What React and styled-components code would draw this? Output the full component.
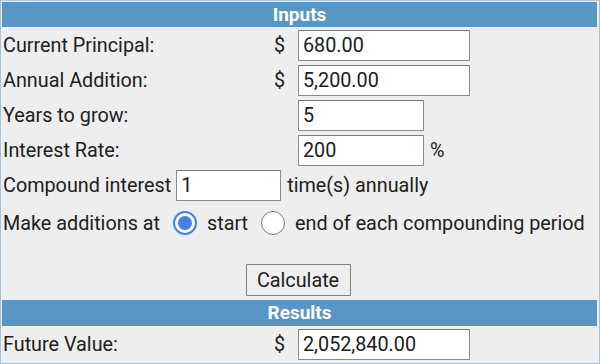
import React from "react";
import styled, { createGlobalStyle } from "styled-components";

const GlobalStyle = createGlobalStyle`
  html, body {
    margin: 0;
    padding: 0;
    background: #eeeeee;
  }
  body {
    font-family: Roboto, "Liberation Sans", Arial, sans-serif;
  }
`;

const Panel = styled.div`
  box-sizing: border-box;
  width: 600px;
  height: 364px;
  border: 1px solid #a3c2db;
  border-top-color: #b4c9d8;
  padding: 1px 2px 1px 1px;
  background: #eeeeee;
  color: #202020;
  font-size: 19.8px;
  display: flex;
  flex-direction: column;
`;

const Heading = styled.div`
  height: ${(p) => p.$h || 25}px;
  line-height: ${(p) => p.$h || 25}px;
  background: #5996c4;
  color: #ffffff;
  font-weight: bold;
  font-size: 19px;
  text-align: center;
`;

const FieldGrid = styled.div`
  display: grid;
  grid-template-columns: 263px 32px 1fr;
  grid-auto-rows: 35px;
  align-items: center;
  padding: 1px 0 0 1px;
`;

const Label = styled.div`
  white-space: nowrap;
`;

const Dollar = styled.div`
  text-align: left;
  padding-left: 8px;
`;

const InputCell = styled.div`
  display: flex;
  align-items: center;
  gap: 6px;
`;

const Field = styled.input`
  box-sizing: border-box;
  width: ${(p) => p.$w}px;
  height: 31px;
  margin: 0;
  padding: 0 4px;
  border: 1px solid #8a8a8a;
  border-top-color: #7a7a7a;
  border-radius: 1px;
  background: #ffffff;
  color: #202020;
  font-family: inherit;
  font-size: 19.8px;
  outline: none;
`;

const Line = styled.div`
  display: flex;
  align-items: center;
  height: ${(p) => p.$h}px;
  padding-left: 1px;
  white-space: nowrap;
`;

const Gap = styled.span`
  display: inline-block;
  width: ${(p) => p.$w}px;
`;

const Radio = styled.span`
  box-sizing: border-box;
  display: inline-block;
  flex: none;
  width: 24px;
  height: 24px;
  border-radius: 50%;
  background: #ffffff;
  border: ${(p) => (p.$on ? "2px solid #4a7ee8" : "1.5px solid #7a7a7a")};
  position: relative;

  &::after {
    content: "";
    display: ${(p) => (p.$on ? "block" : "none")};
    position: absolute;
    left: 3px;
    top: 3px;
    width: 14px;
    height: 14px;
    border-radius: 50%;
    background: #4a7ee8;
  }
`;

const ButtonRow = styled.div`
  display: flex;
  justify-content: center;
  padding: 20px 0 4px;
`;

const Button = styled.button`
  box-sizing: border-box;
  width: 105px;
  height: 32px;
  margin: 0 0 0 -3px;
  padding: 0;
  border: 1px solid #7e7e7e;
  border-radius: 1px;
  background: #efefef;
  color: #202020;
  font-family: inherit;
  font-size: 19.8px;
`;

export default function App() {
  return (
    <>
      <GlobalStyle />
      <Panel>
        <Heading>Inputs</Heading>
        <FieldGrid>
          <Label>Current Principal:</Label>
          <Dollar>$</Dollar>
          <InputCell>
            <Field $w={172} defaultValue="680.00" />
          </InputCell>

          <Label>Annual Addition:</Label>
          <Dollar>$</Dollar>
          <InputCell>
            <Field $w={172} defaultValue="5,200.00" />
          </InputCell>

          <Label>Years to grow:</Label>
          <Dollar />
          <InputCell>
            <Field $w={126} defaultValue="5" />
          </InputCell>

          <Label>Interest Rate:</Label>
          <Dollar />
          <InputCell>
            <Field $w={126} defaultValue="200" />
            <span>%</span>
          </InputCell>
        </FieldGrid>

        <Line $h={35}>
          Compound interest
          <Gap $w={5} />
          <Field $w={105} defaultValue="1" />
          <Gap $w={6} />
          time(s) annually
        </Line>

        <Line $h={42}>
          Make additions at
          <Gap $w={13} />
          <Radio $on />
          <Gap $w={10} />
          start
          <Gap $w={13} />
          <Radio />
          <Gap $w={10} />
          end of each compounding period
        </Line>

        <ButtonRow>
          <Button>Calculate</Button>
        </ButtonRow>

        <Heading $h={26}>Results</Heading>
        <FieldGrid>
          <Label>Future Value:</Label>
          <Dollar>$</Dollar>
          <InputCell>
            <Field $w={172} defaultValue="2,052,840.00" />
          </InputCell>
        </FieldGrid>
      </Panel>
    </>
  );
}
